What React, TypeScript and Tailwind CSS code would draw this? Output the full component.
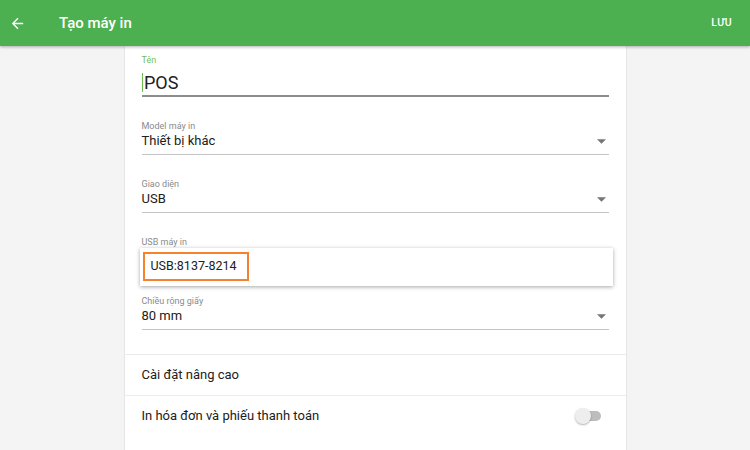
import React from 'react';

const font = { fontFamily: 'Roboto, "Noto Sans", sans-serif' };

const Caret: React.FC = () => (
  <svg width="9" height="5" viewBox="0 0 10 5" className="mr-[3px]">
    <path d="M0 0 L10 0 L5 5 Z" fill="#757575" />
  </svg>
);

interface SelectFieldProps {
  label: string;
  value: string;
  className?: string;
}

const SelectField: React.FC<SelectFieldProps> = ({ label, value, className = '' }) => (
  <div className={className}>
    <div className="text-[9px] leading-[12px] text-[#8a8a8a]">{label}</div>
    <div className="flex items-center justify-between h-[19px] text-[13px] text-[#212121]">
      <span>{value}</span>
      <Caret />
    </div>
    <div className="h-[1px] mt-[3px] bg-[#c4c4c4]" />
  </div>
);

const Toggle: React.FC = () => (
  <div className="relative w-[26px] h-[16px] mr-[8px]">
    <div className="absolute right-0 top-[3px] w-[20px] h-[10px] rounded-full bg-[#bdbdbd]" />
    <div className="absolute left-0 top-0 w-[16px] h-[16px] rounded-full bg-[#eeeeee] shadow-[0_1px_2px_rgba(0,0,0,0.3)]" />
  </div>
);

export default function App() {
  return (
    <div className="w-[750px] h-[450px] overflow-hidden bg-[#f4f4f4] flex flex-col" style={font}>
      <header className="relative z-10 h-[46px] shrink-0 bg-[#4caf50] flex items-center text-white shadow-[0_1px_3px_rgba(0,0,0,0.3)]">
        <svg width="17" height="17" viewBox="0 0 24 24" className="ml-[9px]">
          <path d="M20 11H7.83l5.59-5.59L12 4l-8 8 8 8 1.41-1.41L7.83 13H20v-2z" fill="#fff" />
        </svg>
        <span className="ml-[33px] text-[15px] font-medium">Tạo máy in</span>
        <span className="ml-auto mr-[18px] text-[10.5px] font-medium tracking-[0.3px]">LƯU</span>
      </header>

      <main className="w-[503px] mx-auto flex-1 bg-white border-x border-[#e6e6e6]">
        <div className="px-[17px] pt-[8px]">
          <div>
            <div className="text-[9px] leading-[12px] text-[#74c05a]">Tên</div>
            <div className="flex items-center h-[24px] mt-[4px] text-[18px] text-[#212121]">
              <span className="w-[1.5px] h-[19px] bg-[#6abf4b] mr-[1px]" />
              <span>POS</span>
            </div>
            <div className="h-[1.5px] mt-[1px] bg-[#8d8d8d]" />
          </div>

          <SelectField className="mt-[23px]" label="Model máy in" value="Thiết bị khác" />
          <SelectField className="mt-[23px]" label="Giao diện" value="USB" />

          <div className="mt-[23px]">
            <div className="text-[9px] leading-[12px] text-[#8a8a8a]">USB máy in</div>
            <div className="-ml-[2px] -mr-[4px] h-[38px] bg-white shadow-[0_1px_4px_rgba(0,0,0,0.35)] flex items-center pl-[3px]">
              <div className="w-[106px] h-[29px] border-2 border-[#f5822f] flex items-center pl-[6px] text-[12.5px] text-[#212121]">
                USB:8137-8214
              </div>
            </div>
          </div>

          <SelectField className="mt-[9px]" label="Chiều rộng giấy" value="80 mm" />
        </div>

        <div className="mt-[24px] border-t border-[#ececec]">
          <div className="h-[40px] flex items-center px-[17px] text-[13px] text-[#212121]">Cài đặt nâng cao</div>
          <div className="h-[42px] border-t border-[#ececec] flex items-center justify-between px-[17px] text-[13px] text-[#212121]">
            <span>In hóa đơn và phiếu thanh toán</span>
            <Toggle />
          </div>
        </div>
      </main>
    </div>
  );
}
